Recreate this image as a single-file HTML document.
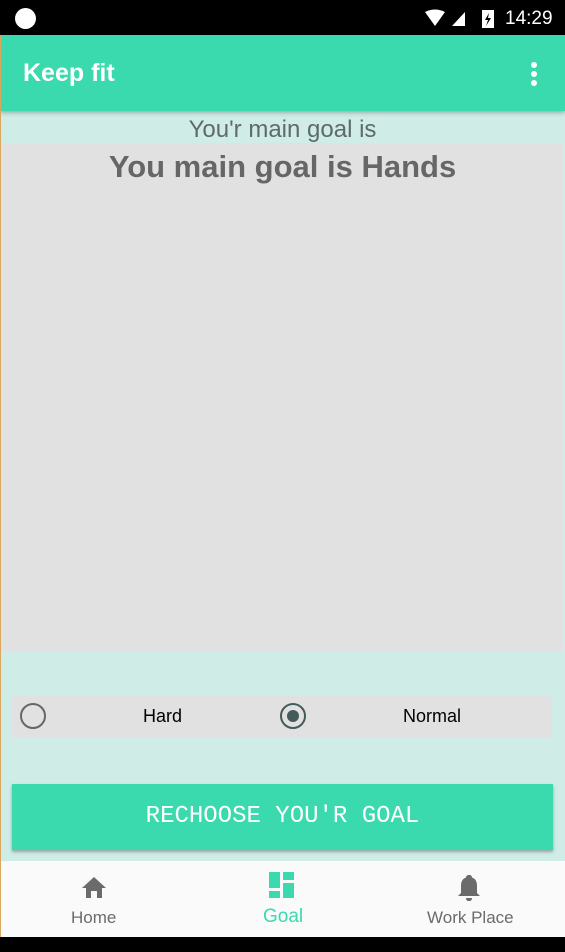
<!DOCTYPE html>
<html><head><style>
*{margin:0;padding:0;box-sizing:border-box}
body{width:565px;height:952px;position:relative;overflow:hidden;background:#cfece6;font-family:"Liberation Sans",Roboto,sans-serif}
.a{position:absolute}
</style></head><body>
<div class="a" style="left:0;top:0;width:565px;height:35px;background:#000"></div>
<div class="a" style="left:15px;top:8px;width:21px;height:21px;border-radius:50%;background:#fff"></div>
<svg class="a" style="left:423px;top:9px" width="80" height="20" viewBox="0 0 80 20">
<path d="M2 3 Q12 -2 22 3 L12 17 Z" fill="#fff"/>
<path d="M29 17 L42 3 L42 17 Z" fill="#fff"/><path d="M36 17 L42 10 L42 17Z" fill="#fff"/>
<rect x="59" y="1" width="12" height="18" fill="#fff"/><path d="M66 4 L62 11 L65 11 L63 17 L68 9 L65 9 Z" fill="#000"/>
</svg>
<div class="a" style="left:505px;top:8px;color:#fff;font-size:19px">14:29</div>
<div class="a" style="left:0;top:35px;width:565px;height:76px;background:#3ad9ae;box-shadow:0 2px 4px rgba(0,0,0,.25)"></div>
<div class="a" style="left:23px;top:59px;color:#fff;font-size:25px;font-weight:bold">Keep fit</div>
<div class="a" style="left:531px;top:62px;width:6px;height:6px;border-radius:50%;background:#fff;box-shadow:0 9px 0 #fff,0 18px 0 #fff"></div>
<div class="a" style="left:0;top:116px;width:565px;text-align:center;color:#5f6b68;font-size:24px">You'r main goal is</div>
<div class="a" style="left:0;top:143px;width:563px;height:508px;background:#e1e1e1"></div>
<div class="a" style="left:0;top:149px;width:565px;text-align:center;color:#666;font-size:31px;font-weight:bold">You main goal is Hands</div>
<div class="a" style="left:12px;top:695px;width:540px;height:43px;background:#e1e1e1"></div>
<div class="a" style="left:20px;top:703px;width:26px;height:26px;border-radius:50%;border:2.5px solid #666"></div>
<div class="a" style="left:143px;top:706px;font-size:18px;color:#000">Hard</div>
<div class="a" style="left:280px;top:703px;width:26px;height:26px;border-radius:50%;border:2.5px solid #455a5a"></div>
<div class="a" style="left:287px;top:710px;width:12px;height:12px;border-radius:50%;background:#455a5a"></div>
<div class="a" style="left:403px;top:706px;font-size:18px;color:#000">Normal</div>
<div class="a" style="left:12px;top:784px;width:541px;height:66px;background:#3ad9ae;box-shadow:0 2px 3px rgba(0,0,0,.3)"></div>
<div class="a" style="left:12px;top:803px;width:541px;text-align:center;color:#fff;font-family:'Liberation Mono',monospace;font-size:24px">RECHOOSE YOU'R GOAL</div>
<div class="a" style="left:0;top:861px;width:565px;height:76px;background:#fafafa"></div>
<svg class="a" style="left:81px;top:875px" width="26" height="24" viewBox="0 0 26 24"><path d="M13 2 L1 13 L5 13 L5 23 L10 23 L10 16 L16 16 L16 23 L21 23 L21 13 L25 13 Z" fill="#6b6b6b"/></svg>
<div class="a" style="left:71px;top:908px;font-size:17px;color:#6b6b6b">Home</div>
<svg class="a" style="left:269px;top:872px" width="26" height="26" viewBox="0 0 26 26" fill="#3ad9ae"><rect x="0" y="0" width="11" height="16"/><rect x="14" y="0" width="11" height="8"/><rect x="0" y="19" width="11" height="7"/><rect x="14" y="11" width="11" height="15"/></svg>
<div class="a" style="left:263px;top:906px;font-size:19px;color:#3ad9ae">Goal</div>
<svg class="a" style="left:457px;top:874px" width="24" height="28" viewBox="0 0 24 28"><path d="M12 1 C10 1 9 2 9 3.5 C5 5 4 8 4 12 L4 19 L1 22 L23 22 L20 19 L20 12 C20 8 19 5 15 3.5 C15 2 14 1 12 1Z M9 24 L15 24 C15 26 14 27 12 27 C10 27 9 26 9 24Z" fill="#6b6b6b"/></svg>
<div class="a" style="left:427px;top:908px;font-size:17px;color:#6b6b6b">Work Place</div>
<div class="a" style="left:0;top:937px;width:565px;height:15px;background:#000"></div>
<div class="a" style="left:0;top:35px;width:1px;height:902px;background:#d9a860"></div>
</body></html>
